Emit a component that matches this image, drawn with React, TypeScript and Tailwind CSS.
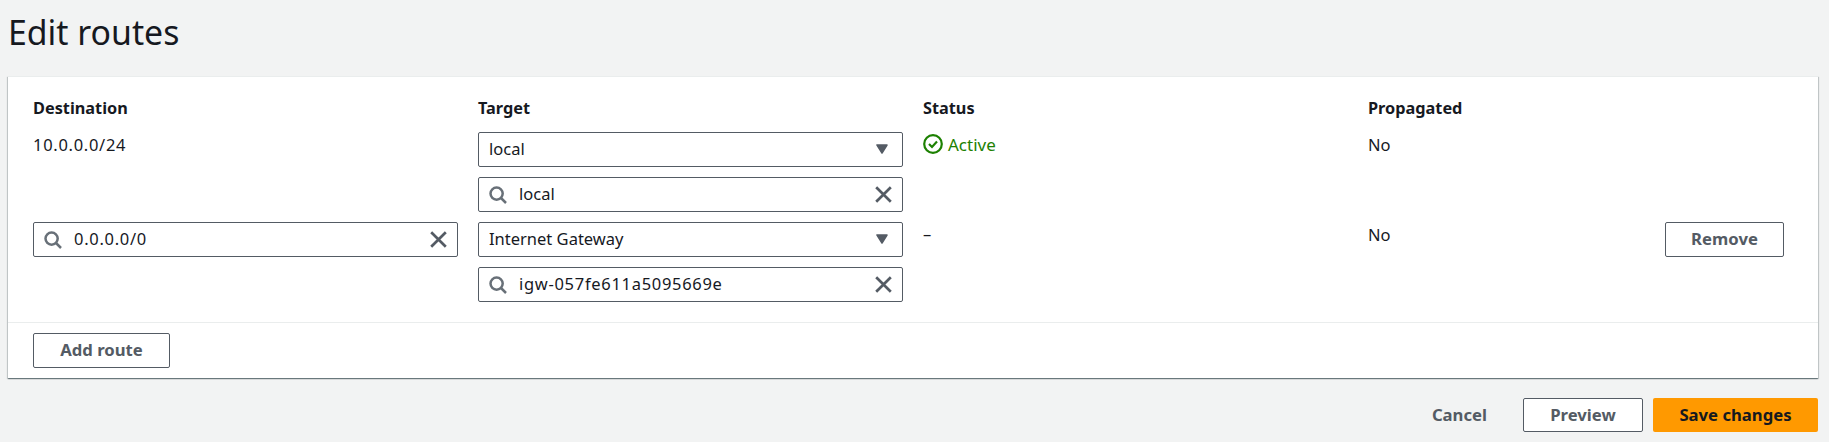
const FONT = "font-['Noto_Sans','Open_Sans',sans-serif]"

function SearchIcon() {
  return (
    <svg width="18" height="18" viewBox="0 0 18 18" fill="none" stroke="#687078" strokeWidth="2.5" className="shrink-0">
      <circle cx="7.6" cy="7.6" r="6.1" />
      <path d="M12 12 L17 17" />
    </svg>
  )
}

function ClearIcon() {
  return (
    <svg width="17" height="17" viewBox="0 0 17 17" fill="none" stroke="#545b64" strokeWidth="2.7" className="shrink-0">
      <path d="M1.2 1.2 L15.8 15.8 M15.8 1.2 L1.2 15.8" />
    </svg>
  )
}

function Caret() {
  return (
    <svg width="12" height="10" viewBox="0 0 12 10" className="shrink-0">
      <path d="M1 1 H11 L6 9 Z" fill="#545b64" stroke="#545b64" strokeWidth="1.5" strokeLinejoin="round" />
    </svg>
  )
}

function ActiveIcon() {
  return (
    <svg width="20" height="20" viewBox="0 0 20 20" fill="none" stroke="#1d8102" strokeWidth="2.2" className="shrink-0">
      <circle cx="10" cy="10" r="8.8" />
      <path d="M6 10 L9 13 L14 7.5" />
    </svg>
  )
}

function SelectBox({ value }: { value: string }) {
  return (
    <div className="flex items-center justify-between h-[35px] pl-[10px] pr-[14px] pb-[1px] bg-white border border-[#545b64] rounded-[2px]">
      <span className="text-[#16191f]">{value}</span>
      <Caret />
    </div>
  )
}

function SearchBox({ value, numeric }: { value: string; numeric?: boolean }) {
  return (
    <div className="flex items-center h-[35px] pl-[10px] pr-[10px] bg-white border border-[#545b64] rounded-[2px]">
      <SearchIcon />
      <span className={`ml-[12px] flex-1 pb-[1px] text-[#16191f] ${numeric ? 'tracking-[0.7px]' : ''}`}>{value}</span>
      <ClearIcon />
    </div>
  )
}

function OutlineButton({ label, className }: { label: string; className: string }) {
  return (
    <button className={`pb-[1px] bg-white border border-[#545b64] rounded-[2px] text-[16.7px] font-bold text-[#545b64] ${className}`}>
      {label}
    </button>
  )
}

export default function App() {
  return (
    <div className={`${FONT} h-[442px] bg-[#f2f3f3] text-[16.5px] leading-[22px] text-[#16191f] overflow-hidden`}>
      {/* Header */}
      <h1 className="pl-[8px] pt-[10px] h-[76px] text-[33.8px] leading-[44px] font-normal">Edit routes</h1>

      {/* Card */}
      <div className="ml-[8px] w-[1810px] h-[302px] bg-white flex flex-col shadow-[0_1px_1px_0_rgba(0,28,36,0.4),1px_1px_1px_0_rgba(0,28,36,0.15),-1px_1px_1px_0_rgba(0,28,36,0.15)] border-t border-[#eaeded]">
        <div className="h-[245px] pl-[25px] pr-[34px] pt-[20px] grid grid-cols-[425px_425px_425px_1fr] gap-x-[20px] content-start">
          <div className="font-bold text-[16.3px] h-[35px]">Destination</div>
          <div className="font-bold text-[16.3px]">Target</div>
          <div className="font-bold text-[16.3px]">Status</div>
          <div className="font-bold text-[16.3px]">Propagated</div>

          {/* Existing route */}
          <div className="pt-[2px] tracking-[0.7px]">10.0.0.0/24</div>
          <div className="flex flex-col gap-[10px]">
            <SelectBox value="local" />
            <SearchBox value="local" />
          </div>
          <div className="flex items-start gap-[5px] pt-[2px] text-[17px] text-[#1d8102]">
            <ActiveIcon />
            <span>Active</span>
          </div>
          <div className="pt-[2px]">No</div>

          {/* New route */}
          <div className="mt-[10px]">
            <SearchBox value="0.0.0.0/0" numeric />
          </div>
          <div className="mt-[10px] flex flex-col gap-[10px]">
            <SelectBox value="Internet Gateway" />
            <SearchBox value="igw-057fe611a5095669e" numeric />
          </div>
          <div className="mt-[10px] pt-[1px]">–</div>
          <div className="mt-[10px] flex justify-between items-start">
            <span className="pt-[2px]">No</span>
            <OutlineButton label="Remove" className="w-[119px] h-[35px]" />
          </div>
        </div>

        <div className="flex-1 border-t border-[#eaeded] pl-[25px] pt-[10px]">
          <OutlineButton label="Add route" className="w-[137px] h-[35px]" />
        </div>
      </div>

      {/* Footer actions */}
      <div className="w-[1818px] mt-[20px] flex items-center justify-end">
        <span className="font-bold text-[16.7px] text-[#545b64] mr-[36px]">Cancel</span>
        <OutlineButton label="Preview" className="w-[120px] h-[34px]" />
        <button className="ml-[10px] w-[165px] h-[34px] pb-[1px] bg-[#ff9900] rounded-[2px] text-[16.7px] font-bold text-[#16191f]">
          Save changes
        </button>
      </div>
    </div>
  )
}
